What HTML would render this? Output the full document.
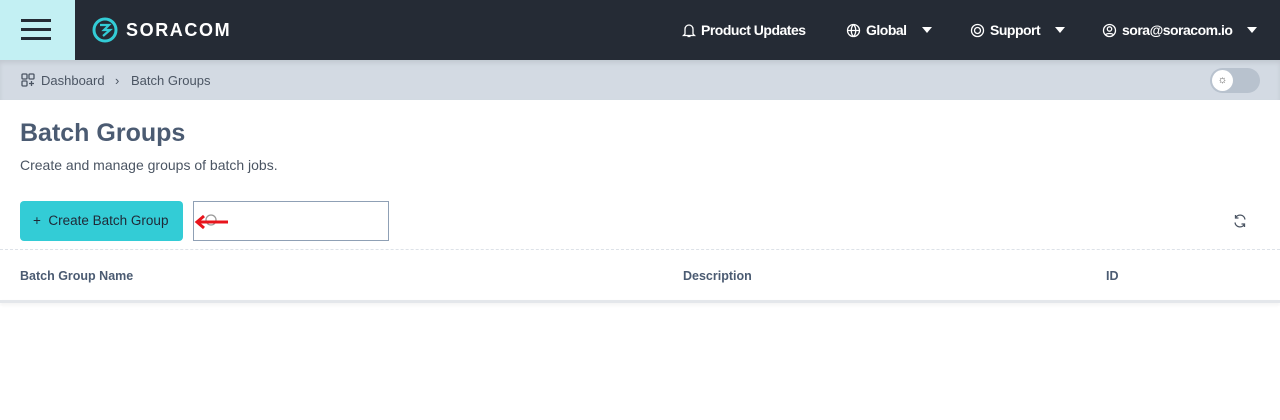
<!DOCTYPE html>
<html><head><meta charset="utf-8"><style>
*{box-sizing:border-box;margin:0;padding:0}
body{width:1280px;height:420px;background:#fff;font-family:"Liberation Sans",sans-serif;position:relative;overflow:hidden}
.top{position:absolute;left:0;top:0;width:1280px;height:60px;background:#252b35}
.burger{position:absolute;left:0;top:0;width:75px;height:60px;background:#c3f0f3}
.burger i{position:absolute;left:21px;width:30px;height:3px;background:#252b35}
.nav{position:absolute;top:22px;color:#fff;font-size:14px;font-weight:bold;display:flex;align-items:center;gap:5px;letter-spacing:-0.5px}
.tri{width:0;height:0;border-left:5px solid transparent;border-right:5px solid transparent;border-top:6px solid #fff;margin-left:10px}
.bc{position:absolute;top:60px;left:0;width:1280px;height:40px;background:#d3dae3;box-shadow:inset 0 3px 4px rgba(0,0,0,.08)}
.bc span{position:absolute;top:13px;font-size:13px;color:#4b5563}
h1{position:absolute;left:20px;top:119px;font-size:25px;color:#4b5b72;font-weight:bold}
.sub{position:absolute;left:20px;top:157px;font-size:14px;color:#4b5563}
.btn{position:absolute;left:20px;top:201px;width:163px;height:40px;background:#33ccd6;border-radius:4px;font-size:13.5px;color:#1f2937;padding:12px 0 0 13px}
.search{position:absolute;left:193px;top:201px;width:196px;height:40px;border:1px solid #8fa0b5}
.th{position:absolute;top:269px;font-size:12.5px;font-weight:bold;color:#4b5b72}
</style></head><body>
<div class="top">
<div class="burger"><i style="top:19px"></i><i style="top:28px"></i><i style="top:37px"></i></div>
<svg style="position:absolute;left:92px;top:17px" width="26" height="26" viewBox="0 0 26 26"><circle cx="13" cy="13" r="11" fill="none" stroke="#33ccd6" stroke-width="3"/><path d="M8 8h9l-5 5h6l-7 6" fill="none" stroke="#33ccd6" stroke-width="2.2"/></svg>
<div style="position:absolute;left:126px;top:20px;color:#fff;font-size:18px;font-weight:bold;letter-spacing:1.6px">SORACOM</div>
<div class="nav" style="left:682px"><svg width="14" height="15" viewBox="0 0 14 15"><path d="M3 11V6a4 4 0 018 0v5l1.5 1.5h-11zM5.5 13.5h3" fill="none" stroke="#fff" stroke-width="1.3"/></svg>Product Updates</div>
<div class="nav" style="left:846px"><svg width="15" height="15" viewBox="0 0 15 15" fill="none" stroke="#fff" stroke-width="1.3"><circle cx="7.5" cy="7.5" r="6"/><path d="M1.5 7.5h12M7.5 1.5c-3 3-3 9 0 12M7.5 1.5c3 3 3 9 0 12"/></svg>Global<span class="tri"></span></div>
<div class="nav" style="left:970px"><svg width="15" height="15" viewBox="0 0 15 15" fill="none" stroke="#fff" stroke-width="1.3"><circle cx="7.5" cy="7.5" r="6"/><circle cx="7.5" cy="7.5" r="3"/></svg>Support<span class="tri"></span></div>
<div class="nav" style="left:1102px"><svg width="15" height="15" viewBox="0 0 15 15" fill="none" stroke="#fff" stroke-width="1.3"><circle cx="7.5" cy="7.5" r="6"/><circle cx="7.5" cy="6" r="2.2"/><path d="M3.5 12c1-2 7-2 8 0"/></svg>sora@soracom.io<span class="tri"></span></div>
</div>
<div class="bc">
<svg style="position:absolute;left:21px;top:13px" width="14" height="14" viewBox="0 0 14 14" fill="none" stroke="#4b5563" stroke-width="1.3"><rect x="1" y="1" width="5" height="5" rx="1"/><rect x="8" y="1" width="5" height="5" rx="1"/><rect x="1" y="8" width="5" height="5" rx="1"/><path d="M10.5 8v5M8 10.5h5"/></svg>
<span style="left:41px">Dashboard</span><span style="left:115px">›</span><span style="left:131px">Batch Groups</span>
<div style="position:absolute;left:1210px;top:8px;width:50px;height:25px;border-radius:13px;background:#b8c2ce"><div style="position:absolute;left:2px;top:2px;width:21px;height:21px;border-radius:50%;background:#fff;text-align:center;font-size:11px;line-height:21px;color:#555">☼</div></div>
</div>
<h1>Batch Groups</h1>
<div class="sub">Create and manage groups of batch jobs.</div>
<div class="btn">+&nbsp;&nbsp;Create Batch Group</div>
<div class="search"><svg style="position:absolute;left:0;top:10px" width="40" height="20" viewBox="0 0 40 20"><circle cx="17" cy="8" r="5" fill="none" stroke="#999" stroke-width="1.3"/><path d="M34 10H4M10 4L3 10l7 6" fill="none" stroke="#e8141c" stroke-width="3"/></svg></div>
<svg style="position:absolute;left:1232px;top:213px" width="16" height="16" viewBox="0 0 16 16" fill="none" stroke="#4b5563" stroke-width="1.3"><path d="M13 6.5A5 5 0 003.5 5M3 9.5A5 5 0 0012.5 11M3.5 2v3h3M12.5 14v-3h-3"/></svg>
<div style="position:absolute;left:0;top:249px;width:1280px;border-top:1px dashed #dde2e8"></div>
<div class="th" style="left:20px">Batch Group Name</div>
<div class="th" style="left:683px">Description</div>
<div class="th" style="left:1106px">ID</div>
<div style="position:absolute;left:0;top:300px;width:1280px;height:3px;background:#e4e7eb;box-shadow:0 2px 3px rgba(0,0,0,.06)"></div>
</body></html>
